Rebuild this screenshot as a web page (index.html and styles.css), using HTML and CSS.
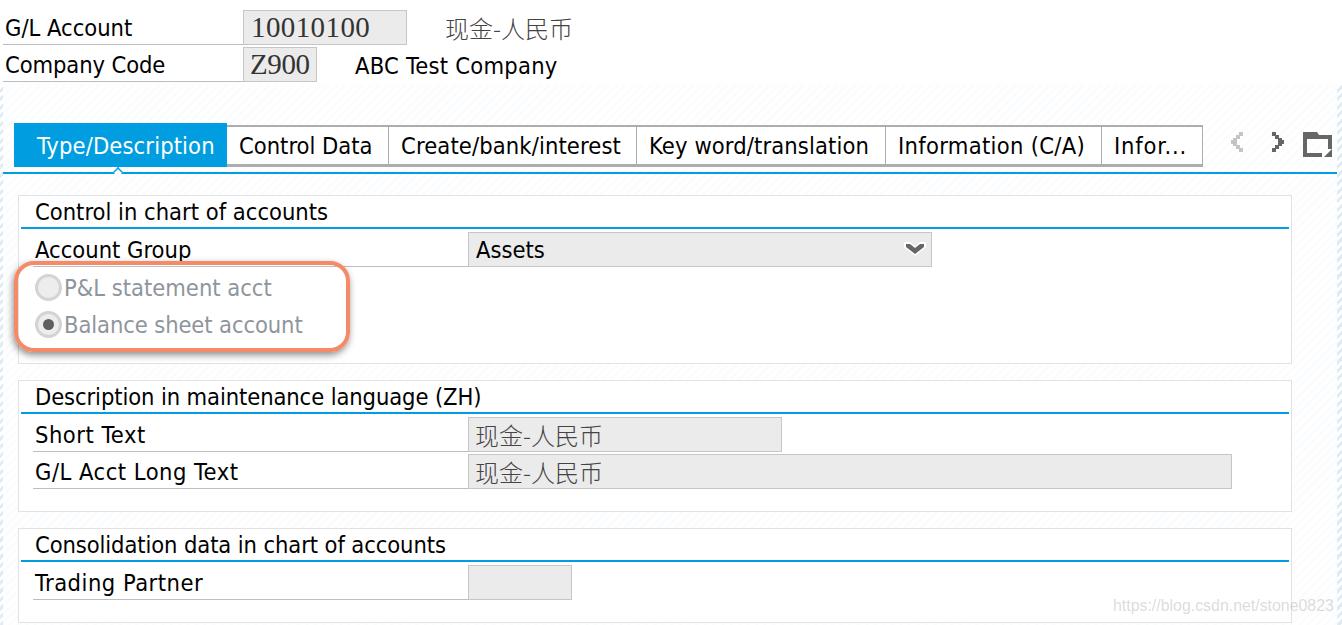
FILE: index.html
```html
<!DOCTYPE html>
<html lang="en">
<head>
<meta charset="utf-8">
<title>G/L Account</title>
<link rel="stylesheet" href="styles.css">
</head>
<body>
<header class="head">
  <div class="head-row">
    <span class="label head-label">G/L Account</span>
    <span class="field mono w-account">10010100</span>
    <span class="desc-cn">现金-人民币</span>
  </div>
  <div class="head-row">
    <span class="label head-label narrow">Company Code</span>
    <span class="field mono w-company">Z900</span>
    <span class="desc-en">ABC Test Company</span>
  </div>
</header>
<main class="canvas">
  <nav class="tabs">
    <span class="tab active">Type/Description</span>
    <span class="tab t2">Control Data</span>
    <span class="tab t3">Create/bank/interest</span>
    <span class="tab t4">Key word/translation</span>
    <span class="tab t5">Information (C/A)</span>
    <span class="tab t6">Infor...</span>
    <span class="tab-tools">
      <svg class="nav-ico" width="12" height="20" viewBox="0 0 12 20"><path d="M8 0h4v4H9v3H6v6h3v3h3v4H8v-3H5v-3H2v-2H0V8h2V6h3V3h3z" fill="#c4c4c4"/></svg>
      <svg class="nav-ico n2" width="12" height="20" viewBox="0 0 12 20"><path d="M0 0h4v3h3v3h3v2h2v4h-2v2H7v3H4v3H0v-4h3v-3h3V7H3V4H0z" fill="#666"/></svg>
      <svg class="nav-ico n3" width="30" height="28" viewBox="0 0 30 28"><path d="M0 1h14l2 3h13v14h-4V8H4v14h15v4H0z" fill="#666"/><path d="M29 18v8h-8z" fill="#666"/></svg>
    </span>
  </nav>
  <div class="tab-rule"><span class="notch"></span></div>

  <section class="group g1">
    <h2 class="group-title">Control in chart of accounts</h2>
    <div class="row">
      <span class="label row-label">Account Group</span>
      <span class="field select w-select">Assets
        <svg class="chev" width="22" height="16" viewBox="0 0 22 16"><path d="M0 1h6l5 4 5-4h6v5l-11 9L0 6z" fill="#fff"/><path d="M2 3h4l5 4 5-4h4v3l-9 7-9-7z" fill="#666"/></svg>
      </span>
    </div>
    <div class="radio-row"><span class="radio"></span><span class="radio-text">P&amp;L statement acct</span></div>
    <div class="radio-row"><span class="radio on"></span><span class="radio-text narrow">Balance sheet account</span></div>
    <div class="callout"></div>
  </section>

  <section class="group g2">
    <h2 class="group-title narrow">Description in maintenance language (ZH)</h2>
    <div class="row">
      <span class="label row-label wide">Short Text</span>
      <span class="field cn w-short">现金-人民币</span>
    </div>
    <div class="row r-tight">
      <span class="label row-label wide">G/L Acct Long Text</span>
      <span class="field cn w-long">现金-人民币</span>
    </div>
  </section>

  <section class="group g3">
    <h2 class="group-title narrow">Consolidation data in chart of accounts</h2>
    <div class="row">
      <span class="label row-label wide">Trading Partner</span>
      <span class="field w-partner"></span>
    </div>
  </section>
</main>
<div class="watermark">https://blog.csdn.net/stone0823</div>
</body>
</html>
```
FILE: styles.css
```css
* { box-sizing: border-box; }
html, body { margin: 0; height: 625px; overflow: hidden; }
body {
  background: #fff;
  color: #000;
  font-family: "DejaVu Sans Condensed", "DejaVu Sans", "Noto Sans CJK SC", sans-serif;
  font-stretch: condensed;
  font-size: 23.5px;
  position: relative;
}
.head { padding: 10px 0 0 3px; height: 85px; }
.head-row { display: flex; height: 35px; margin-bottom: 2px; align-items: stretch; }
.label {
  display: block;
  line-height: 37px;
  border-bottom: 1px solid #bdbdbd;
  white-space: nowrap;
}
.narrow { letter-spacing: -.1px; }
.wide { letter-spacing: .5px; }
.head-label { width: 240px; padding-left: 2px; }
.field {
  display: block;
  background: #ebebeb;
  border: 1px solid #c6c6c6;
  height: 35px;
  position: relative;
}
.mono {
  font-family: "Liberation Serif", serif;
  font-size: 29px;
  line-height: 33px;
  color: #333;
  padding-left: 7px;
  letter-spacing: .4px;
}
.w-account { width: 164px; }
.w-company { width: 74px; padding-left: 6px; letter-spacing: -.4px; }
.desc-cn, .cn {
  font-family: "Noto Sans CJK SC", sans-serif;
  font-weight: 300;
  font-stretch: normal;
  font-size: 24px;
  color: #444;
}
.desc-cn { margin-left: 38px; line-height: 35px; }
.desc-en { margin-left: 38px; line-height: 38px; letter-spacing: .25px; }
.canvas {
  height: 540px;
  padding: 38px 5px 0 3px;
  background:
    repeating-linear-gradient(135deg, #fff 0 3px, #dfecf6 3px 6px) left top / 3px 100% no-repeat,
    repeating-linear-gradient(135deg, #fff 0 3px, #dfecf6 3px 6px) right top / 5px 100% no-repeat,
    repeating-linear-gradient(135deg, #fff 0 3px, #fafcfd 3px 6px);
}
.tabs { display: flex; height: 44px; padding-left: 11px; letter-spacing: .12px; }
.tab {
  background: #fff;
  border: solid #adadad;
  border-width: 2px 0 3px 1px;
  margin-top: 2px;
  height: 42px;
  padding-left: 12px;
  line-height: 38px;
  white-space: nowrap;
}
.active {
  width: 213px;
  margin-top: 0;
  height: 44px;
  background: #009de0;
  color: #fff;
  border: 0;
  padding-left: 23px;
  line-height: 46px;
}
.t2 { width: 161px; border-left: 0; letter-spacing: 0; }
.t3 { width: 248px; }
.t4 { width: 249px; }
.t5 { width: 216px; letter-spacing: .3px; }
.t6 { width: 102px; border-right-width: 1px; letter-spacing: .8px; }
.tab-tools { display: flex; align-items: flex-start; padding: 9px 0 0 28px; }
.nav-ico { display: block; }
.n2 { margin-left: 29px; }
.n3 { margin: -1px 0 0 19px; }
.tab-rule { height: 2px; margin-top: 5px; background: #009de0; position: relative; }
.notch {
  position: absolute;
  left: 110px;
  top: -5px;
  width: 10px;
  height: 10px;
  background: #fff;
  border: solid #009de0;
  border-width: 2px 0 0 2px;
  transform: rotate(45deg) scale(.7);
}
.group {
  margin: 21px 0 0 15px;
  width: 1274px;
  background: #fff;
  border: 1px solid #e2e2e2;
  padding: 0 2px;
  position: relative;
}
.g1 { height: 169px; }
.g2 { height: 132px; margin-top: 16px; }
.g3 { height: 95px; margin-top: 16px; }
.group-title {
  margin: 0;
  height: 33px;
  padding-left: 14px;
  font-size: inherit;
  font-weight: 400;
  line-height: 32px;
  border-bottom: 2px solid #009de0;
}
.row { display: flex; padding-left: 12px; height: 35px; margin: 3px 0 2px; }
.r-tight { margin-top: 2px; }
.row-label { width: 435px; padding-left: 2px; }
.select { padding-left: 7px; line-height: 34px; }
.w-select { width: 464px; }
.chev { position: absolute; right: 5px; top: 8px; }
.cn { line-height: 34px; padding-left: 6px; }
.w-short { width: 314px; }
.w-long { width: 764px; }
.w-partner { width: 104px; }
.radio-row { display: flex; align-items: center; height: 37px; padding-left: 14px; }
.radio {
  width: 27px;
  height: 27px;
  border-radius: 50%;
  border: 3px solid #d4d4d4;
  background: #ebedef;
  flex: none;
  position: relative;
}
.on::after {
  content: "";
  position: absolute;
  left: 5px;
  top: 5px;
  width: 11px;
  height: 11px;
  border-radius: 50%;
  background: #5f5f5f;
}
.radio-text { margin-left: 2px; color: #8e959c; }
.callout {
  position: absolute;
  left: -5px;
  top: 65px;
  width: 336px;
  height: 91px;
  border: 4px solid #f58a68;
  border-radius: 20px;
  box-shadow: -1px 3px 7px rgba(0,0,0,.45);
}
.watermark {
  position: absolute;
  left: 1113px;
  top: 597px;
  font-family: "Liberation Sans", sans-serif;
  font-stretch: normal;
  font-size: 15.9px;
  color: rgba(170,170,170,.42);
}
```
